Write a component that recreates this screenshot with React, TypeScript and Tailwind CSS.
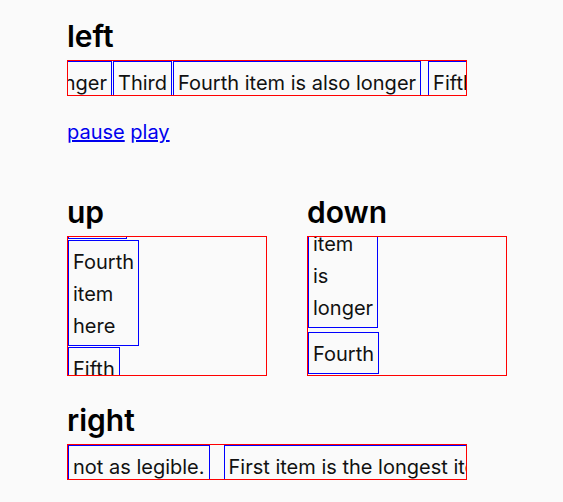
export default function App() {
  const item =
    "shrink-0 border border-[#0000ff] px-1 pt-[5px] pb-[3px] text-[20px] leading-8 whitespace-nowrap";
  const vitem =
    "shrink-0 w-min border border-[#0000ff] px-1 pt-[5px] pb-[3px] text-[20px] leading-8";
  const heading = "text-[30px] leading-[34px] font-semibold text-black";
  return (
    <div className="min-h-[502px] bg-[#fafafa] pt-[19px] pl-[67px] text-[#111] font-['Inter',sans-serif]">
      <h2 className={heading}>left</h2>
      <div className="mt-[7px] flex h-9 w-[400px] items-start overflow-hidden border border-[#ff0000]">
        <div className="flex w-[44px] shrink-0 justify-end">
          <div className={item}>Second item is longer</div>
        </div>
        <div className={`${item} ml-px`}>Third</div>
        <div className={`${item} ml-px`}>Fourth item is also longer</div>
        <div className={`${item} ml-[7px]`}>Fifth item</div>
      </div>

      <div className="mt-[20px] text-[20px] leading-8">
        <a href="#" className="text-[#0000ee] underline">pause</a>{" "}
        <a href="#" className="text-[#0000ee] underline">play</a>
      </div>

      <div className="mt-[47px] flex gap-10">
        <div className="w-[200px]">
          <h2 className={heading}>up</h2>
          <div className="mt-[7px] flex h-[140px] w-[200px] flex-col items-start overflow-hidden border border-[#ff0000]">
            <div className="flex h-[2px] shrink-0 flex-col justify-end">
              <div className={vitem}>Third</div>
            </div>
            <div className={`${vitem} mt-px`}>Fourth item here</div>
            <div className={`${vitem} mt-px`}>Fifth</div>
          </div>
        </div>
        <div className="w-[200px]">
          <h2 className={heading}>down</h2>
          <div className="mt-[7px] flex h-[140px] w-[200px] flex-col items-start overflow-hidden border border-[#ff0000]">
            <div className="flex h-[91px] shrink-0 flex-col justify-end">
              <div className={vitem}>Third item is longer</div>
            </div>
            <div className={`${vitem} mt-[4px]`}>Fourth</div>
          </div>
        </div>
      </div>

      <h2 className={`${heading} mt-[27px]`}>right</h2>
      <div className="mt-[7px] flex h-9 w-[400px] items-start overflow-hidden border border-[#ff0000]">
        <div className={item}>not as legible.</div>
        <div className={`${item} ml-[14px]`}>First item is the longest item in the list</div>
      </div>
    </div>
  );
}
